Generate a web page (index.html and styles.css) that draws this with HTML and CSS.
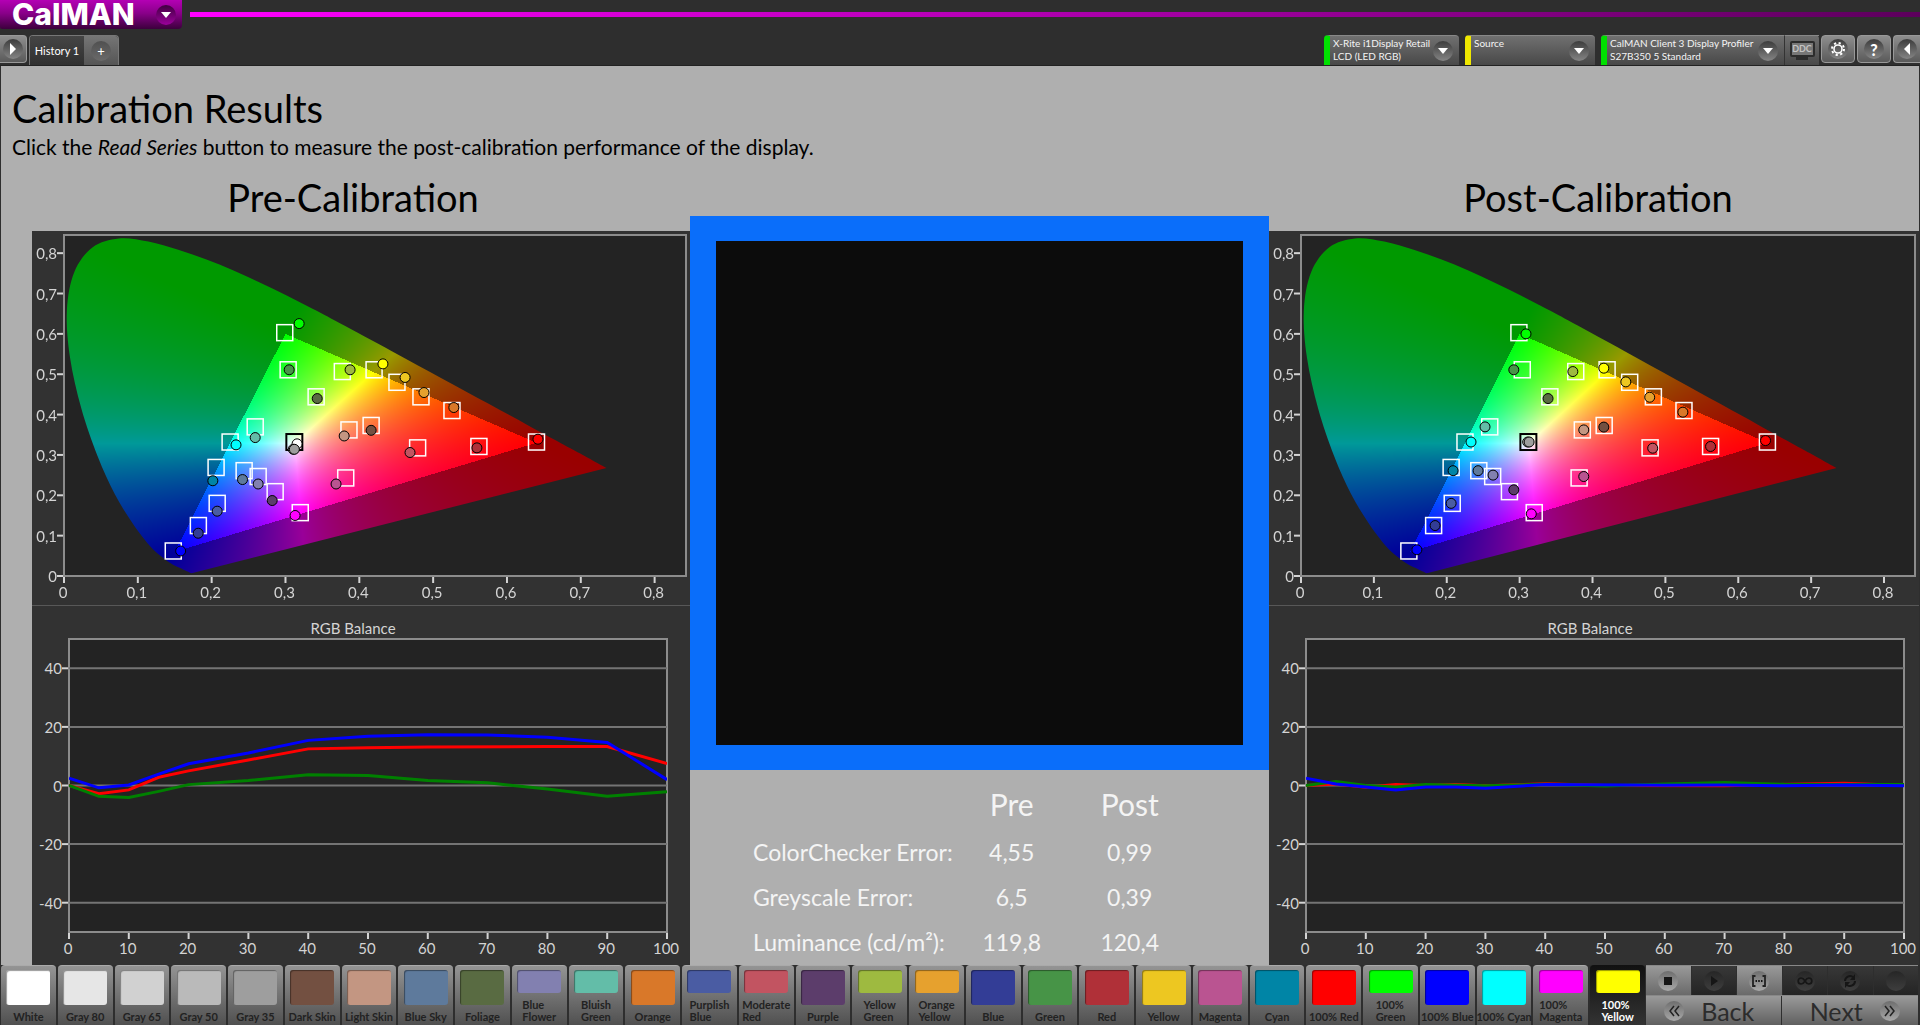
FILE: index.html
```html
<!DOCTYPE html>
<html lang="en">
<head>
<meta charset="utf-8">
<title>CalMAN - Calibration Results</title>
<link rel="stylesheet" href="styles.css">
</head>
<body>
<header class="top">
  <div class="brand-row">
    <button class="brand" type="button" aria-haspopup="menu">CalMAN
      <span class="dimple dimple-brand"><svg width="10" height="6" viewBox="0 0 10 6"><path d="M0 0h10L5 6z" fill="#fff"/></svg></span>
    </button>
    <div class="brand-line"></div>
  </div>
  <div class="tool-row">
    <button class="square square-left" type="button" aria-label="Expand"><span class="dimple"><svg width="8" height="12" viewBox="0 0 8 12"><path d="M1 0v12l6-6z" fill="#fff"/></svg></span></button>
    <nav class="tabs">
      <button class="tab" type="button">History 1</button>
      <button class="tab-add" type="button" aria-label="Add tab"><span class="dimple dimple-soft">+</span></button>
    </nav>
    <div class="devices">
      <button class="device meter" type="button" aria-haspopup="menu"><span class="device-text">X-Rite i1Display Retail<br>LCD (LED RGB)</span><span class="dimple"><svg width="10" height="6" viewBox="0 0 10 6"><path d="M0 0h10L5 6z" fill="#fff"/></svg></span></button>
      <button class="device source" type="button" aria-haspopup="menu"><span class="device-text">Source</span><span class="dimple"><svg width="10" height="6" viewBox="0 0 10 6"><path d="M0 0h10L5 6z" fill="#fff"/></svg></span></button>
      <div class="device-pair">
        <button class="device display" type="button" aria-haspopup="menu"><span class="device-text">CalMAN Client 3 Display Profiler<br>S27B350 5 Standard</span><span class="dimple"><svg width="10" height="6" viewBox="0 0 10 6"><path d="M0 0h10L5 6z" fill="#fff"/></svg></span></button>
        <button class="ddc" type="button"><span class="ddc-screen">DDC</span><span class="ddc-foot"></span></button>
      </div>
      <button class="square" type="button" aria-label="Settings"><span class="dimple"><svg width="16" height="16" viewBox="0 0 16 16"><circle cx="8" cy="8" r="4" fill="none" stroke="#fff" stroke-width="1.6"/><circle cx="8" cy="8" r="6" fill="none" stroke="#fff" stroke-width="2" stroke-dasharray="2.2 2.5"/></svg></span></button>
      <button class="square" type="button" aria-label="Help"><span class="dimple help">?</span></button>
      <button class="square square-right" type="button" aria-label="Collapse"><span class="dimple"><svg width="8" height="12" viewBox="0 0 8 12"><path d="M7 0v12L1 6z" fill="#fff"/></svg></span></button>
    </div>
  </div>
</header>

<main class="page">
  <h1 class="title">Calibration Results</h1>
  <p class="intro">Click the <em>Read Series</em> button to measure the post-calibration performance of the display.</p>
  <div class="board">
    <section class="side side-pre">
      <h2 class="side-title">Pre-Calibration</h2>
      <div class="panel">
        <div class="cie"><canvas class="locus"></canvas><svg class="plot" data-chart="cie" data-set="pre"></svg></div>
        <div class="balance"><h3 class="chart-title">RGB Balance</h3><svg class="plot" data-chart="balance" data-set="pre"></svg></div>
      </div>
    </section>
    <section class="middle">
      <div class="patch"><div class="patch-field"></div></div>
      <table class="results">
        <thead><tr><td></td><th scope="col">Pre</th><th scope="col">Post</th></tr></thead>
        <tbody>
          <tr><th scope="row">ColorChecker Error:</th><td>4,55</td><td>0,99</td></tr>
          <tr><th scope="row">Greyscale Error:</th><td>6,5</td><td>0,39</td></tr>
          <tr><th scope="row">Luminance (cd/m²):</th><td>119,8</td><td>120,4</td></tr>
        </tbody>
      </table>
    </section>
    <section class="side side-post">
      <h2 class="side-title">Post-Calibration</h2>
      <div class="panel">
        <div class="cie"><canvas class="locus"></canvas><svg class="plot" data-chart="cie" data-set="post"></svg></div>
        <div class="balance"><h3 class="chart-title">RGB Balance</h3><svg class="plot" data-chart="balance" data-set="post"></svg></div>
      </div>
    </section>
  </div>
</main>

<footer class="bottom">
  <div class="swatches">
    <button class="swatch" type="button"><span class="chip" style="background:#ffffff"></span><span class="name">White</span></button>
    <button class="swatch" type="button"><span class="chip" style="background:#e6e6e6"></span><span class="name">Gray 80</span></button>
    <button class="swatch" type="button"><span class="chip" style="background:#d1d1d1"></span><span class="name">Gray 65</span></button>
    <button class="swatch" type="button"><span class="chip" style="background:#bababa"></span><span class="name">Gray 50</span></button>
    <button class="swatch" type="button"><span class="chip" style="background:#9e9e9e"></span><span class="name">Gray 35</span></button>
    <button class="swatch" type="button"><span class="chip" style="background:#735041"></span><span class="name">Dark Skin</span></button>
    <button class="swatch" type="button"><span class="chip" style="background:#c39682"></span><span class="name">Light Skin</span></button>
    <button class="swatch" type="button"><span class="chip" style="background:#5e7a9c"></span><span class="name">Blue Sky</span></button>
    <button class="swatch" type="button"><span class="chip" style="background:#596b42"></span><span class="name">Foliage</span></button>
    <button class="swatch" type="button"><span class="chip" style="background:#8280b0"></span><span class="name">Blue<br>Flower</span></button>
    <button class="swatch" type="button"><span class="chip" style="background:#63bda8"></span><span class="name">Bluish<br>Green</span></button>
    <button class="swatch" type="button"><span class="chip" style="background:#d97829"></span><span class="name">Orange</span></button>
    <button class="swatch" type="button"><span class="chip" style="background:#4a5ca3"></span><span class="name">Purplish<br>Blue</span></button>
    <button class="swatch" type="button"><span class="chip" style="background:#c25461"></span><span class="name">Moderate<br>Red</span></button>
    <button class="swatch" type="button"><span class="chip" style="background:#5c3d6b"></span><span class="name">Purple</span></button>
    <button class="swatch" type="button"><span class="chip" style="background:#9eba40"></span><span class="name">Yellow<br>Green</span></button>
    <button class="swatch" type="button"><span class="chip" style="background:#e6a12e"></span><span class="name">Orange<br>Yellow</span></button>
    <button class="swatch" type="button"><span class="chip" style="background:#333d96"></span><span class="name">Blue</span></button>
    <button class="swatch" type="button"><span class="chip" style="background:#479447"></span><span class="name">Green</span></button>
    <button class="swatch" type="button"><span class="chip" style="background:#b03038"></span><span class="name">Red</span></button>
    <button class="swatch" type="button"><span class="chip" style="background:#edc721"></span><span class="name">Yellow</span></button>
    <button class="swatch" type="button"><span class="chip" style="background:#ba5491"></span><span class="name">Magenta</span></button>
    <button class="swatch" type="button"><span class="chip" style="background:#0085a6"></span><span class="name">Cyan</span></button>
    <button class="swatch" type="button"><span class="chip" style="background:#ff0000"></span><span class="name">100% Red</span></button>
    <button class="swatch" type="button"><span class="chip" style="background:#00ff00"></span><span class="name">100%<br>Green</span></button>
    <button class="swatch" type="button"><span class="chip" style="background:#0000ff"></span><span class="name">100% Blue</span></button>
    <button class="swatch" type="button"><span class="chip" style="background:#00ffff"></span><span class="name">100% Cyan</span></button>
    <button class="swatch" type="button"><span class="chip" style="background:#ff00ff"></span><span class="name">100%<br>Magenta</span></button>
    <button class="swatch selected" type="button"><span class="chip" style="background:#ffff00"></span><span class="name">100%<br>Yellow</span></button>
  </div>
  <div class="transport">
    <div class="transport-row">
      <button class="key lit" type="button" aria-label="Stop"><span class="knob"><svg width="16" height="16" viewBox="0 0 16 16"><path d="M4 4h8v8H4z"/></svg></span></button>
      <button class="key" type="button" aria-label="Play"><span class="knob"><svg width="16" height="16" viewBox="0 0 16 16"><path d="M5 3v10l7-5z"/></svg></span></button>
      <button class="key lit" type="button" aria-label="Read series"><span class="knob"><svg width="16" height="16" viewBox="0 0 16 16"><path d="M4.500 3H2v10h2.500M11.500 3H14v10h-2.500" fill="none" stroke="#222" stroke-width="1.800"/><path d="M4.500 7H6v2H4.500zM7.200 7h1.600v2H7.200zM10 7h1.500v2H10z"/></svg></span></button>
      <button class="key" type="button" aria-label="Continuous"><span class="knob"><svg width="16" height="16" viewBox="0 0 16 16"><path d="M8 8C6.500 5.500 5.500 5 4.200 5a3 3 0 0 0 0 6C5.500 11 6.500 10.500 8 8s2.500-3 3.800-3a3 3 0 0 1 0 6C10.500 11 9.500 10.500 8 8z" fill="none" stroke="#161616" stroke-width="1.700"/></svg></span></button>
      <button class="key" type="button" aria-label="Refresh"><span class="knob"><svg width="16" height="16" viewBox="0 0 16 16"><path d="M3 8a5 5 0 0 1 8-4M13 8a5 5 0 0 1-8 4" fill="none" stroke="#161616" stroke-width="2"/><path d="M13 1v6H8zM3 15V9h5z"/></svg></span></button>
      <button class="key" type="button" aria-label="Record" disabled><span class="knob"></span></button>
    </div>
    <div class="transport-row">
      <button class="step" type="button"><span class="knob"><svg width="12" height="14" viewBox="0 0 12 14"><path d="M6 2L2 7l4 5M11 2L7 7l4 5" fill="none" stroke="#222" stroke-width="1.500"/></svg></span><span>Back</span></button>
      <button class="step" type="button"><span>Next</span><span class="knob"><svg width="12" height="14" viewBox="0 0 12 14"><path d="M1 2l4 5-4 5M6 2l4 5-4 5" fill="none" stroke="#222" stroke-width="1.500"/></svg></span></button>
    </div>
  </div>
</footer>
<script src="charts.js"></script>
</body>
</html>
```
FILE: styles.css
```css
* { box-sizing: border-box; }

body {
  margin: 0;
  min-height: 100vh;
  display: flex;
  flex-direction: column;
  background: #2e2e2e;
  font-family: Lato, "Open Sans", sans-serif;
  color: #000;
}

button {
  margin: 0;
  padding: 0;
  border: 0;
  background: none;
  font: inherit;
  color: inherit;
}

h1, h2, h3, p { margin: 0; font-weight: 400; }

/* header */
.top { height: 66px; border-bottom: 1px solid #222; }

.brand-row { display: flex; align-items: center; height: 29px; gap: 8px; }

.brand {
  width: 182px;
  height: 29px;
  padding: 0 6px 0 12px;
  display: flex;
  align-items: center;
  justify-content: space-between;
  border-radius: 0 0 4px 2px;
  background: linear-gradient(#b400b4, #8a008a 45%, #3c003c);
  color: #fff;
  font-family: Inter, Lato, sans-serif;
  font-size: 30px;
  font-weight: 800;
  line-height: 29px;
}

.brand-line {
  flex: 1;
  height: 5px;
  background: linear-gradient(90deg, #ff00ff, #5c005c);
}

.dimple {
  flex: none;
  width: 20px;
  height: 20px;
  display: flex;
  align-items: center;
  justify-content: center;
  border-radius: 50%;
  background: linear-gradient(#3c3c3c, #858585);
  color: #fff;
}

.dimple-brand { background: linear-gradient(#400040, #9c009c); }

.dimple-soft { background: linear-gradient(#505050, #6a6a6a); font-size: 13px; }

.help { font-size: 16px; font-weight: 900; }

.tool-row { display: flex; align-items: flex-start; padding-top: 6px; }

.square {
  width: 34px;
  height: 28px;
  display: flex;
  align-items: center;
  justify-content: center;
  border: 1px solid #999;
  border-radius: 4px;
  background: linear-gradient(#8e8e8e, #5a5a5a);
}

.square-left { width: 27px; border-left: 0; border-radius: 0 4px 4px 0; }

.square-right { width: 27px; border-right: 0; border-radius: 4px 0 0 4px; }

.tabs {
  display: flex;
  height: 30px;
  margin-left: 2px;
  border: 1px solid #777;
  border-bottom: 0;
  border-radius: 4px 4px 0 0;
  overflow: hidden;
}

.tab {
  width: 54px;
  background: linear-gradient(#454545, #303030);
  color: #fff;
  font-size: 11px;
}

.tab-add {
  width: 34px;
  display: flex;
  align-items: center;
  justify-content: center;
  background: linear-gradient(#757575, #555);
}

.devices { display: flex; margin-left: auto; gap: 2px; }

.device, .device-pair {
  height: 30px;
  border-radius: 4px 4px 0 0;
  background: linear-gradient(#707070, #484848);
}

.device {
  display: flex;
  align-items: center;
  justify-content: space-between;
  padding: 0 6px 0 3px;
  border-top: 1px solid #888;
  border-left: 6px solid #00e000;
  color: #f4f4f4;
  text-align: left;
}

.device-text { align-self: flex-start; padding-top: 1px; font-size: 10px; line-height: 13px; white-space: nowrap; }

.meter { width: 135px; margin-right: 4px; }

.source { width: 130px; margin-right: 4px; border-left-color: #f0e800; }

.device-pair { display: flex; width: 218px; }

.display { width: 184px; border-radius: 4px 0 0 0; border-right: 1px solid #333; }

.ddc {
  flex: 1;
  display: flex;
  flex-direction: column;
  align-items: center;
  justify-content: center;
  border-top: 1px solid #888;
}

.ddc-screen {
  width: 25px;
  height: 16px;
  border: 2px solid #2c2c2c;
  border-radius: 2px;
  background: #777;
  color: #c4c4c4;
  font-size: 9px;
  font-weight: 700;
  line-height: 12px;
}

.ddc-foot { width: 12px; height: 3px; background: #2c2c2c; }

/* page */
.page {
  flex: 1;
  display: flex;
  flex-direction: column;
  margin: 0 1px;
  background: #afafaf;
}

.title { padding: 18px 0 0 11px; font-size: 38px; line-height: 48px; }

.intro { padding: 2px 0 0 11px; font-size: 21px; line-height: 26px; }

.board {
  display: grid;
  grid-template-columns: 658fr 579fr 650fr;
  padding-left: 31px;
  margin-top: 15px;
}

.side-title {
  height: 56px;
  font-size: 38px;
  line-height: 44px;
  text-align: center;
}

.side-pre .side-title { padding-right: 16px; }

.side-post .side-title { padding-left: 8px; }

.panel { background: #323232; color: #d4d4d4; }

.cie {
  position: relative;
  padding: 4px 4px 29px 32px;
  border-bottom: 1px solid #585858;
}

.plot { display: block; width: 100%; overflow: visible; }

.cie .plot { position: relative; height: 341px; }

.locus {
  position: absolute;
  top: 4px;
  left: 32px;
  width: calc(100% - 36px);
  height: 341px;
}

.balance { padding: 11px 23px 33px 37px; }

.side-post .balance { padding-right: 15px; }

.balance .plot { height: 293px; }

.chart-title {
  padding-right: 30px;
  font-size: 15px;
  line-height: 22px;
  text-align: center;
}

.side .label { fill: #d4d4d4; font-size: 15px; }

.frame { fill: #232323; stroke: #8c8c8c; stroke-width: 2; }

.cie .frame { fill: none; }

.grid { stroke: #747474; stroke-width: 2; }

.tick { stroke: #d4d4d4; stroke-width: 2; }

.curve { fill: none; stroke-width: 3; vector-effect: non-scaling-stroke; }

.target { fill: none; stroke: #fff; stroke-width: 1.5; }

.target-white { stroke: #000; stroke-width: 2; }

.reading { stroke: #000; stroke-width: 1; }

/* centre column */
.middle { padding-top: 41px; }

.patch { height: 554px; padding: 25px 26px; background: #0a6efa; }

.patch-field { height: 504px; background: #0c0c0c; }

.results { margin: 18px 0 0 63px; border-collapse: collapse; color: #f4f4f4; font-size: 23px; }

.results th, .results td { height: 45px; padding: 0; font-weight: 400; text-align: center; }

.results tbody th { width: 198px; text-align: left; white-space: nowrap; }

.results td { width: 118px; }

.results thead th { height: 41px; padding-bottom: 8px; font-size: 30px; line-height: 33px; }

.results thead td { height: 41px; }

/* bottom bar */
.bottom { display: flex; height: 60px; }

.swatches { flex: 1; display: grid; grid-template-columns: repeat(29, 1fr); }

.swatch {
  display: flex;
  flex-direction: column;
  align-items: center;
  min-width: 0;
  margin: 0 1px;
  padding: 4px 0 2px;
  border-top: 1px solid #aaa;
  border-radius: 4px 4px 0 0;
  background: linear-gradient(#949494, #505050);
  color: #222;
}

.chip {
  flex: 1;
  width: 44px;
  border-radius: 3px;
  box-shadow: inset 1px 1px 1px rgba(0, 0, 0, 0.4);
}

.name { padding-top: 6px; font-size: 11px; font-weight: 700; line-height: 12px; text-align: left; white-space: nowrap; }

.selected { background: linear-gradient(#111, #333); border-top-color: #111; color: #fff; }

.transport { width: 274px; padding-right: 2px; }

.transport-row { display: flex; height: 30px; border-top: 1px solid #888; gap: 1px; }

.key {
  flex: 1;
  display: flex;
  align-items: center;
  justify-content: center;
  background: linear-gradient(#383838, #242424);
}

.key svg, .step svg { fill: #161616; }

.lit { background: linear-gradient(#999, #6a6a6a); }

.knob {
  width: 20px;
  height: 20px;
  display: flex;
  align-items: center;
  justify-content: center;
  border-radius: 50%;
  background: linear-gradient(#262626, #3e3e3e);
}

.lit .knob, .step .knob { background: linear-gradient(#6e6e6e, #a8a8a8); }

.step {
  flex: 1;
  display: flex;
  align-items: center;
  justify-content: center;
  gap: 17px;
  padding-right: 8px;
  background: linear-gradient(#9a9a9a, #606060);
  color: #2c2c2c;
  font-size: 25px;
  line-height: 28px;
}

.step + .step { padding: 0 0 0 10px; }
```
FILE: charts.js
```js
const X_MAX = 0.8425;
const Y_MAX = 0.845;

// colour, target x, target y, pre x, pre y, post x, post y
const patches = [
  ['#00ff00', 0.299, 0.603, 0.3185, 0.6255, 0.3087, 0.600],
  ['#479447', 0.3036, 0.511, 0.305, 0.511, 0.292, 0.511],
  ['#9eba40', 0.377, 0.5066, 0.3875, 0.511, 0.373, 0.5066],
  ['#596b42', 0.3415, 0.444, 0.343, 0.4397, 0.339, 0.4397],
  ['#c39682', 0.386, 0.362, 0.3795, 0.347, 0.388, 0.362],
  ['#63bda8', 0.259, 0.3695, 0.259, 0.343, 0.2525, 0.3695],
  ['#00ffff', 0.225, 0.332, 0.233, 0.325, 0.2333, 0.332],
  ['#0085a6', 0.206, 0.269, 0.2016, 0.236, 0.2087, 0.261],
  ['#5e7a9c', 0.244, 0.261, 0.2418, 0.239, 0.243, 0.261],
  ['#8280b0', 0.263, 0.2465, 0.263, 0.228, 0.2635, 0.250],
  ['#5c3d6b', 0.286, 0.209, 0.282, 0.187, 0.292, 0.2135],
  ['#4a5ca3', 0.2075, 0.180, 0.2075, 0.1606, 0.206, 0.180],
  ['#333d96', 0.182, 0.125, 0.1818, 0.106, 0.184, 0.125],
  ['#0000ff', 0.148, 0.062, 0.158, 0.062, 0.159, 0.065],
  ['#ff00ff', 0.320, 0.157, 0.313, 0.150, 0.316, 0.154],
  ['#ba5491', 0.3816, 0.243, 0.3685, 0.228, 0.388, 0.2465],
  ['#ffff00', 0.420, 0.511, 0.432, 0.5256, 0.4155, 0.515],
  ['#edc721', 0.451, 0.480, 0.462, 0.492, 0.4457, 0.481],
  ['#e6a12e', 0.4835, 0.444, 0.4876, 0.4546, 0.4785, 0.443],
  ['#d97829', 0.5255, 0.410, 0.528, 0.4175, 0.524, 0.406],
  ['#735041', 0.416, 0.373, 0.416, 0.361, 0.4155, 0.369],
  ['#c25461', 0.479, 0.3175, 0.4687, 0.306, 0.4826, 0.3167],
  ['#b03038', 0.562, 0.321, 0.5593, 0.3175, 0.562, 0.321],
  ['#ff0000', 0.640, 0.332, 0.642, 0.339, 0.6374, 0.3356]
];

const whites = {
  pre: [['#ffffff', 0.3157, 0.3275], ['#d1d1d1', 0.3105, 0.314], ['#9e9e9e', 0.312, 0.314]],
  post: [['#d1d1d1', 0.311, 0.332], ['#9e9e9e', 0.313, 0.332]]
};

const balance = {
  pre: [
    ['#ff0000', [[0, 0], [5, -2.8], [10, -1.5], [15, 2.8], [20, 5], [30, 8.7], [40, 12.5], [50, 12.9], [60, 13.1], [80, 13.3], [90, 13.3], [100, 7.5]]],
    ['#008000', [[0, 0], [5, -3.7], [10, -4.1], [15, -2], [20, 0.3], [30, 1.7], [40, 3.7], [50, 3.4], [60, 1.7], [70, 0.9], [80, -1.2], [90, -3.7], [100, -2.1]]],
    ['#0000ff', [[0, 2.5], [5, -0.8], [10, 0.2], [15, 3.9], [20, 7.4], [30, 11.1], [40, 15.4], [50, 16.8], [60, 17.3], [70, 17.2], [80, 16.5], [90, 14.7], [100, 2]]]
  ],
  post: [
    ['#ff0000', [[0, 0], [5, 0.5], [10, -0.6], [15, 0.3], [20, 0], [25, 0.3], [30, -0.1], [40, 0.6], [50, 0], [70, -0.1], [90, 0.8], [100, 0]]],
    ['#008000', [[0, 0], [5, 1.4], [10, 0], [15, -0.5], [20, 0.3], [30, -0.1], [40, 0.4], [50, -0.2], [60, 0.5], [70, 1], [80, 0.4], [100, 0.3]]],
    ['#0000ff', [[0, 2.5], [5, 0.5], [10, -0.5], [15, -1.5], [20, -0.5], [25, -0.5], [30, -0.9], [40, 0.3], [60, 0.1], [70, 0.2], [80, -0.1], [90, 0.2], [100, -0.1]]]
  ]
};

const locus = [
  [0.1741, 0.005], [0.1733, 0.0048], [0.1714, 0.0051], [0.1644, 0.0109], [0.1566, 0.0177],
  [0.144, 0.0297], [0.1241, 0.0578], [0.1096, 0.0868], [0.0913, 0.1327], [0.0687, 0.2007],
  [0.0454, 0.295], [0.0235, 0.4127], [0.0082, 0.5384], [0.0039, 0.6548], [0.0139, 0.7502],
  [0.0389, 0.812], [0.0743, 0.8338], [0.1142, 0.8262], [0.1547, 0.8059], [0.1929, 0.7816],
  [0.2296, 0.7543], [0.2658, 0.7243], [0.3016, 0.6923], [0.3373, 0.6589], [0.3731, 0.6245],
  [0.4441, 0.5547], [0.5125, 0.4866], [0.5752, 0.4242], [0.627, 0.3725], [0.6658, 0.334],
  [0.6915, 0.3083], [0.719, 0.2809], [0.7347, 0.2653]
];

const NS = 'http://www.w3.org/2000/svg';

function add(parent, name, attrs, text) {
  const el = document.createElementNS(NS, name);
  for (const key in attrs) el.setAttribute(key, attrs[key]);
  if (text !== undefined) el.textContent = text;
  parent.appendChild(el);
  return el;
}

function pct(v) { return (v * 100).toFixed(3) + '%'; }

function xTick(svg, pos, text) {
  const g = add(svg, 'svg', { x: pct(pos), y: '100%', overflow: 'visible' });
  add(g, 'line', { class: 'tick', x1: 0, x2: 0, y1: 1, y2: 7 });
  add(g, 'text', { class: 'label', x: -1, y: 22, 'text-anchor': 'middle' }, text);
}

function yTick(svg, pos, text) {
  const g = add(svg, 'svg', { x: 0, y: pct(pos), overflow: 'visible' });
  add(g, 'line', { class: 'tick', x1: -7, x2: -1, y1: 0, y2: 0 });
  add(g, 'text', { class: 'label', x: -7, y: 6, 'text-anchor': 'end' }, text);
}

function drawCie(svg) {
  const set = svg.dataset.set;
  const at = set === 'pre' ? 3 : 5;
  add(svg, 'rect', { class: 'frame', width: '100%', height: '100%' });
  for (let i = 0; i <= 8; i++) {
    const text = i ? '0,' + i : '0';
    xTick(svg, i / 10 / X_MAX, text);
    yTick(svg, 1 - i / 10 / Y_MAX, text);
  }
  const box = (x, y, cls) => {
    const g = add(svg, 'svg', { x: pct(x / X_MAX), y: pct(1 - y / Y_MAX), overflow: 'visible' });
    add(g, 'rect', { class: cls, x: -8, y: -8, width: 16, height: 16 });
  };
  const dot = (fill, x, y) => add(svg, 'circle', { class: 'reading', fill, r: 5, cx: pct(x / X_MAX), cy: pct(1 - y / Y_MAX) });
  patches.forEach(p => box(p[1], p[2], 'target'));
  box(0.312, 0.332, 'target target-white');
  patches.forEach(p => dot(p[0], p[at], p[at + 1]));
  whites[set].forEach(w => dot(w[0], w[1], w[2]));
}

function drawBalance(svg) {
  add(svg, 'rect', { class: 'frame', width: '100%', height: '100%' });
  for (let v = -40; v <= 40; v += 20) {
    const y = (50 - v) / 100;
    add(svg, 'line', { class: 'grid', x1: 0, x2: '100%', y1: pct(y), y2: pct(y) });
    yTick(svg, y, String(v));
  }
  for (let v = 0; v <= 100; v += 10) xTick(svg, v / 100, String(v));
  const inner = add(svg, 'svg', { width: '100%', height: '100%', viewBox: '0 0 100 100', preserveAspectRatio: 'none' });
  balance[svg.dataset.set].forEach(([stroke, points]) => {
    add(inner, 'polyline', { class: 'curve', stroke, points: points.map(([x, y]) => x + ',' + (50 - y)).join(' ') });
  });
}

// chromaticity to RGB, scaled so that the strongest channel is full; dimmed outside the gamut
function shade(x, y) {
  const X = x / y;
  const Z = (1 - x - y) / y;
  const lin = [
    3.2406 * X - 1.5372 - 0.4986 * Z,
    -0.9689 * X + 1.8758 + 0.0415 * Z,
    0.0557 * X - 0.204 + 1.057 * Z
  ];
  const gain = Math.min(...lin) < 0 ? 153 : 255;
  const top = Math.max(...lin);
  return lin.map(c => gain * Math.max(0, c) / top);
}

function drawLocus(canvas) {
  const w = canvas.width = canvas.clientWidth;
  const h = canvas.height = canvas.clientHeight;
  const ctx = canvas.getContext('2d');
  const image = ctx.createImageData(w, h);
  for (let j = 0; j < h; j++) {
    for (let i = 0; i < w; i++) {
      const c = shade((i + 0.5) / w * X_MAX, (h - j - 0.5) / h * Y_MAX);
      const k = (j * w + i) * 4;
      image.data[k] = c[0];
      image.data[k + 1] = c[1];
      image.data[k + 2] = c[2];
      image.data[k + 3] = 255;
    }
  }
  ctx.putImageData(image, 0, 0);
  const p = locus.map(([x, y]) => [x / X_MAX * w, h - y / Y_MAX * h - 1]);
  ctx.globalCompositeOperation = 'destination-in';
  ctx.beginPath();
  ctx.moveTo(p[0][0], p[0][1]);
  for (let i = 0; i < p.length - 1; i++) {
    const a = p[Math.max(0, i - 1)], b = p[i], c = p[i + 1], d = p[Math.min(p.length - 1, i + 2)];
    ctx.bezierCurveTo(b[0] + (c[0] - a[0]) / 6, b[1] + (c[1] - a[1]) / 6, c[0] - (d[0] - b[0]) / 6, c[1] - (d[1] - b[1]) / 6, c[0], c[1]);
  }
  ctx.closePath();
  ctx.fill();
  ctx.globalCompositeOperation = 'destination-over';
  ctx.fillStyle = '#232323';
  ctx.fillRect(0, 0, w, h);
}

document.querySelectorAll('[data-chart="cie"]').forEach(drawCie);
document.querySelectorAll('[data-chart="balance"]').forEach(drawBalance);

function drawAllLoci() { document.querySelectorAll('.locus').forEach(drawLocus); }
drawAllLoci();
window.addEventListener('resize', drawAllLoci);
```
